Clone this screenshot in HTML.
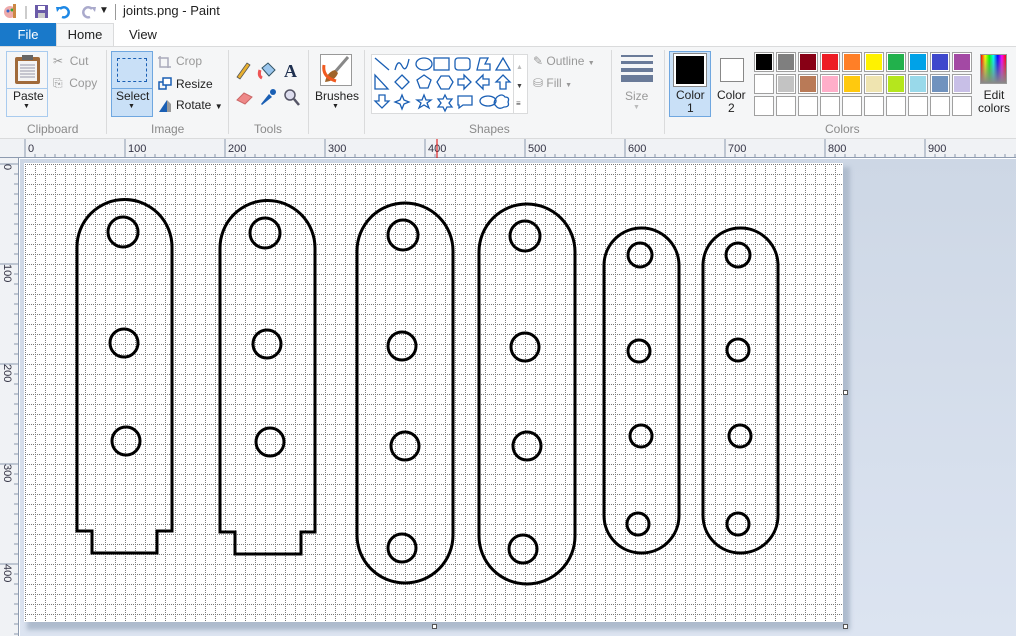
<!DOCTYPE html>
<html><head><style>
*{margin:0;padding:0;box-sizing:border-box}
body{width:1016px;height:636px;overflow:hidden;font-family:"Segoe UI","Liberation Sans",sans-serif;font-size:12px;color:#222;background:#fff;position:relative}
.a{position:absolute}
.lbl{position:absolute;color:#8a8a8a;font-size:12px}
.sw{position:absolute;width:20px;height:20px;border:1px solid #a0a0a0}
.sw i{position:absolute;left:2px;top:2px;width:14px;height:14px}
.g{color:#999}
</style></head><body>
<!-- title bar -->
<div class="a" style="left:0;top:0;width:1016px;height:24px;background:#fff"></div>
<svg class="a" style="left:2px;top:3px" width="110" height="18">
<circle cx="8" cy="9" r="6" fill="#eaa"/><circle cx="6" cy="8" r="1.5" fill="#36c"/><circle cx="10" cy="7" r="1.5" fill="#3a3"/><rect x="11" y="1" width="3" height="14" fill="#c84"/>
<line x1="24" y1="3" x2="24" y2="16" stroke="#999"/>
<rect x="33" y="2" width="13" height="13" fill="#6a5aa8"/><rect x="36" y="3" width="7" height="4" fill="#fff"/><rect x="36" y="10" width="7" height="5" fill="#ccc"/>
<path d="M58 6 a5 5 0 1 1 2 8" stroke="#1e88e5" stroke-width="2.5" fill="none"/><path d="M54 4 l5 0 l-4 5z" fill="#1e88e5"/>
<path d="M90 6 a5 5 0 1 0 -2 8" stroke="#aac" stroke-width="2.5" fill="none"/><path d="M94 4 l-5 0 l4 5z" fill="#aac"/>
</svg>
<div class="a" style="left:99px;top:5px;font-size:10px">&#9660;</div>
<div class="a" style="left:115px;top:4px;width:1px;height:16px;background:#999"></div>
<div class="a" style="left:123px;top:3px;font-size:13px">joints.png - Paint</div>
<!-- tabs -->
<div class="a" style="left:0;top:23px;width:56px;height:23px;background:#1979ca;color:#fff;font-size:13px;text-align:center;line-height:23px">File</div>
<div class="a" style="left:56px;top:23px;width:58px;height:24px;background:#f5f6f7;border:1px solid #dadbdc;border-bottom:none;text-align:center;line-height:22px;font-size:13px">Home</div>
<div class="a" style="left:129px;top:27px;font-size:13px">View</div>
<!-- ribbon -->
<div class="a" style="left:0;top:46px;width:1016px;height:93px;background:#f5f6f7;border-top:1px solid #dadbdc;border-bottom:1px solid #dadbdc"></div>
<!-- clipboard -->
<div class="a" style="left:6px;top:51px;width:42px;height:66px;border:1px solid #a9cbee"></div>
<div class="a" style="left:6px;top:88px;width:42px;height:1px;background:#a9cbee"></div>
<svg class="a" style="left:13px;top:54px" width="30" height="32"><rect x="2" y="3" width="25" height="27" rx="2" fill="#a06a3a"/><rect x="5" y="7" width="19" height="20" fill="#f4f4f4"/><rect x="9" y="1" width="11" height="5" fill="#666"/><g stroke="#99a" stroke-width="1"><line x1="7" y1="11" x2="22" y2="11"/><line x1="7" y1="14" x2="22" y2="14"/><line x1="7" y1="17" x2="22" y2="17"/><line x1="7" y1="20" x2="22" y2="20"/><line x1="7" y1="23" x2="22" y2="23"/></g></svg>
<div class="a" style="left:13px;top:89px;font-size:12px">Paste</div>
<div class="a" style="left:23px;top:103px;font-size:7px">&#9660;</div>
<div class="a g" style="left:53px;top:54px;font-size:12px">✂&nbsp; Cut</div>
<div class="a g" style="left:53px;top:76px;font-size:12px">⎘&nbsp; Copy</div>
<div class="lbl" style="left:27px;top:122px">Clipboard</div>
<div class="a" style="left:106px;top:50px;width:1px;height:84px;background:#dadbdc"></div>
<!-- image -->
<div class="a" style="left:111px;top:51px;width:42px;height:66px;border:1px solid #6fa7e0;background:#c9e0f7"></div>
<div class="a" style="left:111px;top:88px;width:42px;height:1px;background:#6fa7e0"></div>
<div class="a" style="left:117px;top:58px;width:30px;height:24px;border:1px dashed #1a5fb4"></div>
<div class="a" style="left:116px;top:89px">Select</div>
<div class="a" style="left:128px;top:103px;font-size:7px">&#9660;</div>
<svg class="a" style="left:157px;top:54px" width="16" height="60"><path d="M3 2v11h11M1 4h10v10" stroke="#aab" fill="none" stroke-width="1.5"/><rect x="2" y="28" width="7" height="7" fill="none" stroke="#1a5fb4" stroke-width="1.5"/><rect x="6" y="24" width="8" height="7" fill="#fff" stroke="#1a5fb4" stroke-width="1.5"/><path d="M2 58 L10 46 V58Z" fill="#1a5fb4"/><path d="M10 46 L14 50 V58 H10Z" fill="#999"/></svg>
<div class="a g" style="left:176px;top:54px">Crop</div>
<div class="a" style="left:176px;top:77px">Resize</div>
<div class="a" style="left:176px;top:98px">Rotate <span style="font-size:8px">&#9660;</span></div>
<div class="lbl" style="left:151px;top:122px">Image</div>
<div class="a" style="left:228px;top:50px;width:1px;height:84px;background:#dadbdc"></div>
<!-- tools -->
<svg class="a" style="left:234px;top:60px" width="70" height="50">
<path d="M3 17 L13 3 L16 5 L6 19Z" fill="#e8b030" stroke="#555" stroke-width=".8"/>
<path d="M28 8 l6-5 7 7-6 6z" fill="#9cc7ee" stroke="#356"/><path d="M26 10 q-2 6 2 8" stroke="#e55" stroke-width="3" fill="none"/>
<text x="50" y="17" font-family="Liberation Serif" font-weight="bold" font-size="18" fill="#1f3050">A</text>
<path d="M3 40 l7-7 8 4-7 7z" fill="#e88" stroke="#c66"/>
<path d="M27 44 l8-10 3 3-10 8z" fill="#1a5fb4"/><circle cx="39" cy="32" r="3" fill="#1a5fb4"/>
<circle cx="56" cy="35" r="5" fill="#dde" stroke="#556" stroke-width="1.5"/><line x1="60" y1="39" x2="65" y2="45" stroke="#556" stroke-width="2.5"/>
</svg>
<div class="lbl" style="left:254px;top:122px">Tools</div>
<div class="a" style="left:308px;top:50px;width:1px;height:84px;background:#dadbdc"></div>
<!-- brushes -->
<div class="a" style="left:320px;top:54px;width:32px;height:32px;border:1px solid #999;background:#fff"></div>
<svg class="a" style="left:321px;top:55px" width="30" height="30"><path d="M27 2 L14 17" stroke="#888" stroke-width="3"/><path d="M14 15 q-8 2 -10 12 q10 -1 13 -9z" fill="#a0642a"/><path d="M3 10 q-2 12 12 16" stroke="#f05a20" stroke-width="3" fill="none"/></svg>
<div class="a" style="left:315px;top:89px">Brushes</div>
<div class="a" style="left:332px;top:103px;font-size:7px">&#9660;</div>
<div class="a" style="left:364px;top:50px;width:1px;height:84px;background:#dadbdc"></div>
<!-- shapes -->
<div class="a" style="left:371px;top:54px;width:157px;height:60px;border:1px solid #dadbdc;background:#fff"></div>
<svg class="a" style="left:372px;top:55px" width="140" height="58" fill="none" stroke="#1a5fb4" stroke-width="1.3">
<line x1="3" y1="3" x2="17" y2="15"/><path d="M23 15 q3-12 7-4 t7-7"/><ellipse cx="52" cy="9" rx="8" ry="6"/><rect x="62" y="3" width="15" height="12"/><rect x="83" y="3" width="15" height="12" rx="3"/><path d="M105 15 L108 3 H116 L113 9 H118 L118 15Z"/><path d="M124 15 L131 3 L138 15Z"/>
<path d="M3 20 V34 H16Z"/><path d="M30 20 l7 7 -7 7 -7 -7z"/><path d="M52 20 l7 5 -3 8 h-8 l-3 -8z"/><path d="M69 21 h8 l4 6 -4 7 h-8 l-4 -7z"/><path d="M86 24 h6 v-4 l7 7 -7 7 v-4 h-6z"/><path d="M117 24 h-6 v-4 l-7 7 7 7 v-4 h6z"/><path d="M131 20 l7 7 h-4 v7 h-6 v-7 h-4z"/>
<path d="M7 40 h6 v6 h4 l-7 7 -7 -7 h4z"/><path d="M30 40 l2 5 5 2 -5 2 -2 5 -2 -5 -5 -2 5 -2z"/><path d="M52 40 l2 5 5 0 -4 3 2 5 -5 -3 -5 3 2 -5 -4 -3 5 0z"/><path d="M73 40 l2 4 5 0 -3 4 3 4 -5 0 -2 4 -2 -4 -5 0 3 -4 -3 -4 5 0z"/><path d="M86 41 h14 v9 h-9 l-4 3 v-3 h-1z"/><ellipse cx="116" cy="46" rx="8" ry="5"/><path d="M125 42 q5-4 8 0 q5 0 3 5 q2 5 -4 5 q-5 3 -8 -1 q-4 -3 1 -9z"/>
</svg>
<div class="a" style="left:513px;top:55px;width:1px;height:58px;background:#dadbdc"></div>
<div class="a" style="left:516px;top:64px;font-size:7px;color:#bbb">&#9650;</div>
<div class="a" style="left:516px;top:83px;font-size:7px;color:#444">&#9660;</div>
<div class="a" style="left:516px;top:99px;font-size:8px;color:#444">&#8801;</div>
<div class="a g" style="left:533px;top:54px">✎ Outline <span style="font-size:7px">&#9660;</span></div>
<div class="a g" style="left:533px;top:76px">⛁ Fill <span style="font-size:7px">&#9660;</span></div>
<div class="lbl" style="left:469px;top:122px">Shapes</div>
<div class="a" style="left:611px;top:50px;width:1px;height:84px;background:#dadbdc"></div>
<!-- size -->
<div class="a" style="left:621px;top:55px;width:32px;height:2px;background:#6a7b99"></div>
<div class="a" style="left:621px;top:61px;width:32px;height:3px;background:#6a7b99"></div>
<div class="a" style="left:621px;top:68px;width:32px;height:4px;background:#6a7b99"></div>
<div class="a" style="left:621px;top:75px;width:32px;height:7px;background:#6a7b99"></div>
<div class="a g" style="left:625px;top:89px">Size</div>
<div class="a" style="left:633px;top:104px;font-size:7px;color:#bbb">&#9660;</div>
<div class="a" style="left:664px;top:50px;width:1px;height:84px;background:#dadbdc"></div>
<!-- color1/2 -->
<div class="a" style="left:669px;top:51px;width:42px;height:66px;border:1px solid #6fa7e0;background:#c9e0f7"></div>
<div class="a" style="left:674px;top:54px;width:32px;height:32px;border:1px solid #888;background:#000;outline:2px solid #fff;outline-offset:-3px"></div>
<div class="a" style="left:674px;top:54px;width:32px;height:32px;background:#000;border:2px solid #fff;box-shadow:0 0 0 1px #888"></div>
<div class="a" style="left:676px;top:89px;text-align:center;line-height:13px">Color<br>1</div>
<div class="a" style="left:720px;top:58px;width:24px;height:24px;border:1px solid #888;background:#fff"></div>
<div class="a" style="left:717px;top:89px;text-align:center;line-height:13px">Color<br>2</div>
<!-- palette -->
<div id="pal"></div>
<div class="a" style="left:980px;top:54px;width:27px;height:30px;border:1px solid #999;background:linear-gradient(to bottom,rgba(255,255,255,0),#888),linear-gradient(to right,red,#ff0,#0f0,#0ff,#00f,#f0f,red)"></div>
<div class="a" style="left:978px;top:89px;text-align:center;line-height:13px">Edit<br>colors</div>
<div class="lbl" style="left:825px;top:122px">Colors</div>
<!-- rulers -->
<div class="a" style="left:0;top:139px;width:1016px;height:19px;background:#f0f2f5;border-bottom:1px solid #8d9bb0"></div>
<div class="a" style="left:0;top:158px;width:19px;height:478px;background:#f0f2f5;border-right:1px solid #8d9bb0"></div>
<svg class="a" style="left:0;top:139px" width="1016" height="497" font-family="Liberation Sans" font-size="11" fill="#334">
<g id="tt" stroke="#8d9bb0"></g>
<text x="28" y="13">0</text><text x="128" y="13">100</text><text x="228" y="13">200</text><text x="328" y="13">300</text><text x="428" y="13">400</text><text x="528" y="13">500</text><text x="628" y="13">600</text><text x="728" y="13">700</text><text x="828" y="13">800</text><text x="928" y="13">900</text>
<line x1="437" y1="0" x2="437" y2="19" stroke="#d00"/>
<g transform="rotate(90)"><text x="25" y="-4">0</text><text x="125" y="-4">100</text><text x="225" y="-4">200</text><text x="325" y="-4">300</text><text x="425" y="-4">400</text></g>
</svg>
<!-- canvas area -->
<div class="a" style="left:20px;top:159px;width:996px;height:477px;background:linear-gradient(#cdd7e5,#dce4f1)"></div>
<div class="a" style="left:27px;top:167px;width:823px;height:463px;background:#aebbcd;filter:blur(2px)"></div>
<div class="a" style="left:843px;top:390px;width:5px;height:5px;border:1px solid #555;background:#fff"></div>
<div class="a" style="left:843px;top:624px;width:5px;height:5px;border:1px solid #555;background:#fff"></div>
<div class="a" style="left:432px;top:624px;width:5px;height:5px;border:1px solid #555;background:#fff"></div>
<svg class="a" style="left:24px;top:163px" width="819" height="459">
<defs><pattern id="gp" x="1" y="1" width="10" height="10" patternUnits="userSpaceOnUse"><g fill="#7a7a7a"><rect x="0" y="0" width="1" height="1"/><rect x="2" y="0" width="1" height="1"/><rect x="4" y="0" width="1" height="1"/><rect x="6" y="0" width="1" height="1"/><rect x="8" y="0" width="1" height="1"/><rect x="0" y="2" width="1" height="1"/><rect x="0" y="4" width="1" height="1"/><rect x="0" y="6" width="1" height="1"/><rect x="0" y="8" width="1" height="1"/></g></pattern></defs>
<rect width="819" height="459" fill="#fff"/>
<rect width="819" height="459" fill="url(#gp)"/>
<g transform="translate(-24,-163)" fill="none" stroke="#000" stroke-width="3">
<path d="M77 247 A47.5 47.5 0 0 1 172 247 V531 H157 V553 H92 V531 H77Z"/>
<circle cx="123" cy="232" r="15"/><circle cx="124" cy="343" r="14"/><circle cx="126" cy="441" r="14"/>
<path d="M220 248 A47.5 47.5 0 0 1 315 248 V532 H301 V554 H235 V532 H220Z"/>
<circle cx="265" cy="233" r="15"/><circle cx="267" cy="344" r="14"/><circle cx="270" cy="442" r="14"/>
<rect x="357" y="203" width="96" height="380" rx="48"/>
<circle cx="403" cy="235" r="15"/><circle cx="402" cy="346" r="14"/><circle cx="405" cy="446" r="14"/><circle cx="402" cy="548" r="14"/>
<rect x="479" y="204" width="96" height="380" rx="48"/>
<circle cx="525" cy="236" r="15"/><circle cx="525" cy="347" r="14"/><circle cx="527" cy="446" r="14"/><circle cx="523" cy="549" r="14"/>
<rect x="604" y="228" width="75" height="325" rx="37.5"/>
<circle cx="640" cy="255" r="12"/><circle cx="639" cy="351" r="11"/><circle cx="641" cy="436" r="11"/><circle cx="638" cy="524" r="11"/>
<rect x="703" y="228" width="75" height="325" rx="37.5"/>
<circle cx="738" cy="255" r="12"/><circle cx="738" cy="350" r="11"/><circle cx="740" cy="436" r="11"/><circle cx="738" cy="524" r="11"/>
</g>
</svg>
<script>
var c=[["#000","#7f7f7f","#880015","#ed1c24","#ff7f27","#fff200","#22b14c","#00a2e8","#3f48cc","#a349a4"],["#fff","#c3c3c3","#b97a57","#ffaec9","#ffc90e","#efe4b0","#b5e61d","#99d9ea","#7092be","#c8bfe7"]];
var h="";for(var r=0;r<3;r++)for(var i=0;i<10;i++){var x=754+i*22,y=52+r*22;h+='<div class="sw" style="left:'+x+'px;top:'+y+'px;background:#fff">'+(r<2?'<i style="background:'+c[r][i]+';left:1px;top:1px;width:16px;height:16px"></i>':'')+'</div>';}
document.getElementById("pal").innerHTML=h;
var t="";for(var x=25;x<1016;x+=10){t+='<line x1="'+x+'" y1="'+(((x-25)%100==0)?0:15)+'" x2="'+x+'" y2="19"/>';}
for(var y=164;y<636;y+=10){var yy=y-139;t+='<line x1="'+(((y-164)%100==0)?0:14)+'" y1="'+yy+'" x2="19" y2="'+yy+'"/>';}
document.getElementById("tt").innerHTML=t;
</script>
</body></html>
